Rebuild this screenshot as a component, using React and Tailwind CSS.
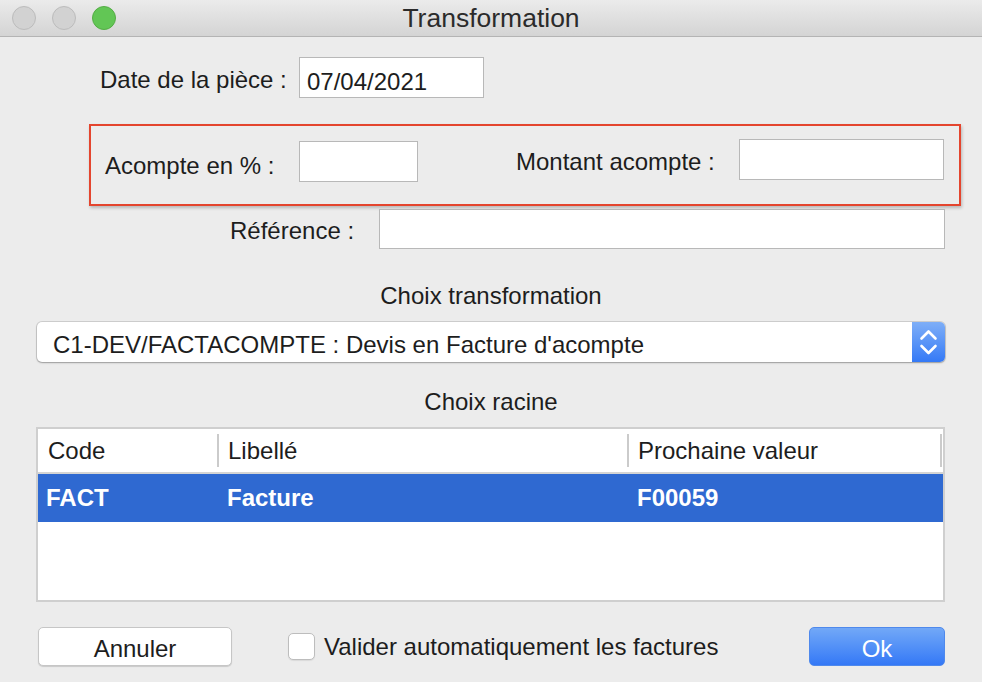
const Field = ({ className = "", children }) => (
  <div
    className={`bg-white border border-[#b8b8b8] flex items-center pl-[7px] ${className}`}
  >
    {children}
  </div>
);

const Stepper = () => (
  <div className="w-[33px] h-full rounded-r-[5px] bg-gradient-to-b from-[#7eaef7] to-[#3479f6] flex items-center justify-center">
    <svg width="33" height="40" viewBox="0 0 33 40" fill="none">
      <path
        d="M9.5 16.5 L16.5 9.5 L23.5 16.5"
        stroke="white"
        strokeWidth="2.6"
        strokeLinecap="round"
        strokeLinejoin="round"
      />
      <path
        d="M9.5 24 L16.5 31 L23.5 24"
        stroke="white"
        strokeWidth="2.6"
        strokeLinecap="round"
        strokeLinejoin="round"
      />
    </svg>
  </div>
);

const App = () => {
  return (
    <div className="w-[982px] h-[682px] overflow-hidden bg-[#ececec] text-[#1d1d1d] text-[24px] leading-[28px] font-['Liberation_Sans',Arial,sans-serif] flex flex-col">
      {/* Title bar */}
      <div className="relative h-[37px] shrink-0 border-b border-[#b4b4b4] bg-gradient-to-b from-[#ebebeb] to-[#d4d4d4] flex items-center">
        <div className="flex items-center gap-[16px] pl-[12px]">
          <span className="w-[24px] h-[24px] rounded-full bg-[#d2d2d2] border border-[#bcbcbc]" />
          <span className="w-[24px] h-[24px] rounded-full bg-[#d2d2d2] border border-[#bcbcbc]" />
          <span className="w-[24px] h-[24px] rounded-full bg-[#62c655] border border-[#54ad45]" />
        </div>
        <div className="absolute inset-0 flex items-center justify-center text-[26.5px] text-[#2b2b2b] pointer-events-none">
          Transformation
        </div>
      </div>

      {/* Date */}
      <div className="flex items-center mt-[20px] ml-[100px]">
        <span className="w-[199px] pt-[4px]">Date de la pièce :</span>
        <Field className="w-[185px] h-[41px] pt-[8px]">07/04/2021</Field>
      </div>

      {/* Acompte block */}
      <div className="mt-[26px] ml-[89px] w-[872px] h-[82px] border-2 border-[#e4452e] shadow-[1px_2px_3px_rgba(0,0,0,0.22)] flex items-start pl-[14px]">
        <span className="w-[194px] mt-[26px]">Acompte en % :</span>
        <Field className="w-[119px] h-[41px] mt-[15px]" />
        <span className="ml-[98px] w-[223px] mt-[22px]">Montant acompte :</span>
        <Field className="w-[205px] h-[41px] mt-[13px]" />
      </div>

      {/* Référence */}
      <div className="flex items-center mt-[3px] ml-[230px]">
        <span className="w-[149px] pt-[4px]">Référence :</span>
        <Field className="w-[566px] h-[40px]" />
      </div>

      {/* Choix transformation */}
      <div className="mt-[33px] text-center">Choix transformation</div>
      <div className="mt-[12px] ml-[37px] w-[908px] h-[40px] flex bg-white rounded-[5px] shadow-[0_0_0_1px_rgba(0,0,0,0.12),0_1px_2px_rgba(0,0,0,0.25)]">
        <div className="flex-1 flex items-center pl-[16px] pt-[6px]">
          C1-DEV/FACTACOMPTE : Devis en Facture d'acompte
        </div>
        <Stepper />
      </div>

      {/* Choix racine */}
      <div className="mt-[26px] text-center">Choix racine</div>
      <div className="mt-[11px] ml-[36px] w-[909px] h-[175px] border-2 border-[#cfcfcf] bg-white flex flex-col">
        <div className="h-[43px] flex items-center">
          <div className="w-[179px] pl-[10px]">Code</div>
          <div className="w-[2px] h-[33px] bg-[#cbcbcb]" />
          <div className="w-[408px] pl-[9px]">Libellé</div>
          <div className="w-[2px] h-[33px] bg-[#cbcbcb]" />
          <div className="flex-1 pl-[9px]">Prochaine valeur</div>
          <div className="w-[2px] h-[33px] bg-[#cbcbcb] mr-[1px]" />
        </div>
        <div className="h-[2px] bg-[#d4d4d4]" />
        <div className="h-[48px] bg-[#2f69d1] text-white font-bold flex items-center">
          <div className="w-[181px] pl-[8px]">FACT</div>
          <div className="w-[410px] pl-[8px]">Facture</div>
          <div className="flex-1 pl-[8px]">F00059</div>
        </div>
      </div>

      {/* Footer */}
      <div className="mt-[25px] ml-[38px] mr-[37px] flex items-center">
        <button className="w-[194px] h-[39px] pt-[5px] bg-white rounded-[5px] border border-[#c6c6c6] shadow-[0_1px_1px_rgba(0,0,0,0.15)] text-[#1d1d1d]">
          Annuler
        </button>
        <span className="ml-[56px] w-[27px] h-[27px] bg-white rounded-[5px] border border-[#bdbdbd] shadow-[0_1px_1px_rgba(0,0,0,0.08)]" />
        <span className="ml-[9px]">Valider automatiquement les factures</span>
        <button className="ml-auto w-[136px] h-[39px] pt-[5px] rounded-[5px] bg-gradient-to-b from-[#72a8f7] to-[#3478f6] border border-[#4f89ec] text-white">
          Ok
        </button>
      </div>
    </div>
  );
};

export default App;
